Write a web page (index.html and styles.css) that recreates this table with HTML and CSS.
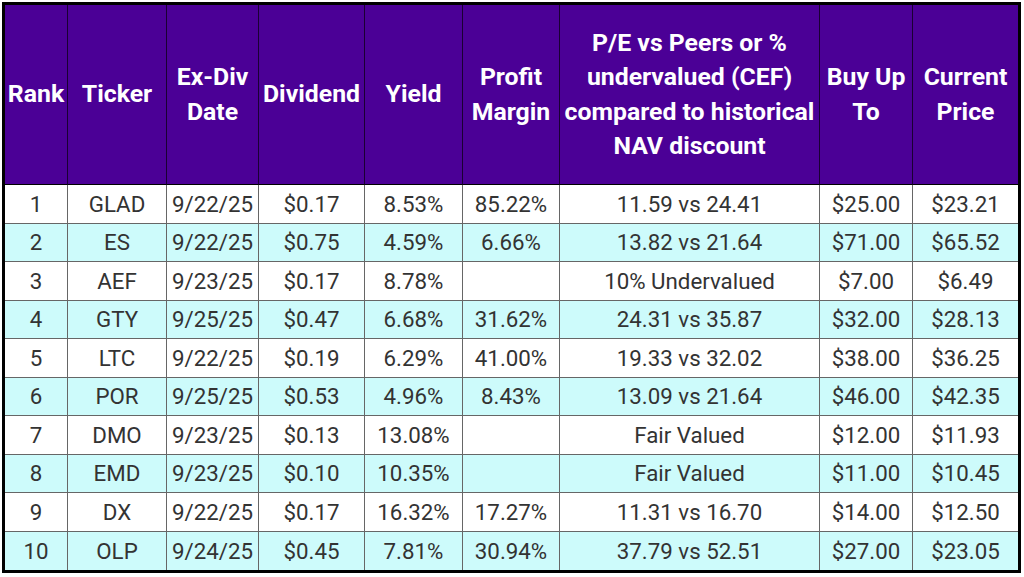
FILE: index.html
```html
<!DOCTYPE html>
<html>
<head>
<meta charset="utf-8">
<link rel="stylesheet" href="styles.css">
</head>
<body>
<table class="divs">
  <colgroup>
    <col class="c-rank"><col class="c-tick"><col class="c-date"><col class="c-div"><col class="c-yld"><col class="c-pm"><col class="c-pe"><col class="c-buy"><col class="c-cur">
  </colgroup>
  <thead>
    <tr>
      <th>Rank</th><th>Ticker</th><th>Ex-Div<br>Date</th><th>Dividend</th><th>Yield</th><th>Profit<br>Margin</th>
      <th>P/E vs Peers or %<br>undervalued (CEF)<br>compared to historical<br>NAV discount</th>
      <th>Buy Up<br>To</th><th>Current<br>Price</th>
    </tr>
  </thead>
  <tbody>
    <tr><td>1</td><td>GLAD</td><td>9/22/25</td><td>$0.17</td><td>8.53%</td><td>85.22%</td><td>11.59 vs 24.41</td><td>$25.00</td><td>$23.21</td></tr>
    <tr class="alt"><td>2</td><td>ES</td><td>9/22/25</td><td>$0.75</td><td>4.59%</td><td>6.66%</td><td>13.82 vs 21.64</td><td>$71.00</td><td>$65.52</td></tr>
    <tr><td>3</td><td>AEF</td><td>9/23/25</td><td>$0.17</td><td>8.78%</td><td></td><td>10% Undervalued</td><td>$7.00</td><td>$6.49</td></tr>
    <tr class="alt"><td>4</td><td>GTY</td><td>9/25/25</td><td>$0.47</td><td>6.68%</td><td>31.62%</td><td>24.31 vs 35.87</td><td>$32.00</td><td>$28.13</td></tr>
    <tr><td>5</td><td>LTC</td><td>9/22/25</td><td>$0.19</td><td>6.29%</td><td>41.00%</td><td>19.33 vs 32.02</td><td>$38.00</td><td>$36.25</td></tr>
    <tr class="alt"><td>6</td><td>POR</td><td>9/25/25</td><td>$0.53</td><td>4.96%</td><td>8.43%</td><td>13.09 vs 21.64</td><td>$46.00</td><td>$42.35</td></tr>
    <tr><td>7</td><td>DMO</td><td>9/23/25</td><td>$0.13</td><td>13.08%</td><td></td><td>Fair Valued</td><td>$12.00</td><td>$11.93</td></tr>
    <tr class="alt"><td>8</td><td>EMD</td><td>9/23/25</td><td>$0.10</td><td>10.35%</td><td></td><td>Fair Valued</td><td>$11.00</td><td>$10.45</td></tr>
    <tr><td>9</td><td>DX</td><td>9/22/25</td><td>$0.17</td><td>16.32%</td><td>17.27%</td><td>11.31 vs 16.70</td><td>$14.00</td><td>$12.50</td></tr>
    <tr class="alt"><td>10</td><td>OLP</td><td>9/24/25</td><td>$0.45</td><td>7.81%</td><td>30.94%</td><td>37.79 vs 52.51</td><td>$27.00</td><td>$23.05</td></tr>
  </tbody>
</table>
</body>
</html>
```
FILE: styles.css
```css
html, body {
  margin: 0;
  padding: 0;
  background: #ffffff;
}
body {
  padding: 2px;
  font-family: Roboto, "Liberation Sans", sans-serif;
}
.divs {
  border-collapse: separate;
  border-spacing: 0;
  table-layout: fixed;
  width: 1019px;
  border: 3px solid #000;
}
.c-rank { width: 63px; }
.c-tick { width: 99px; }
.c-date { width: 92px; }
.c-div  { width: 106px; }
.c-yld  { width: 98px; }
.c-pm   { width: 97px; }
.c-pe   { width: 260px; }
.c-buy  { width: 93px; }
.c-cur  { width: 105px; }

.divs th, .divs td {
  padding: 0;
  text-align: center;
  white-space: nowrap;
  box-sizing: border-box;
}
.divs th {
  background: #4b0096;
  color: #ffffff;
  font-weight: 700;
  font-size: 24.8px;
  line-height: 34.5px;
  height: 180px;
  border-right: 1px solid #1a0033;
  border-bottom: 1px solid #000;
}
.divs td {
  color: #333333;
  font-size: 22.3px;
  height: 38.5px;
  border-right: 1px solid #666;
  border-bottom: 1px solid #666;
}
.divs th:last-child, .divs td:last-child {
  border-right: none;
}
.divs tbody tr:last-child td {
  border-bottom: none;
}
.divs tr.alt td {
  background: #cdfbfb;
}
```
